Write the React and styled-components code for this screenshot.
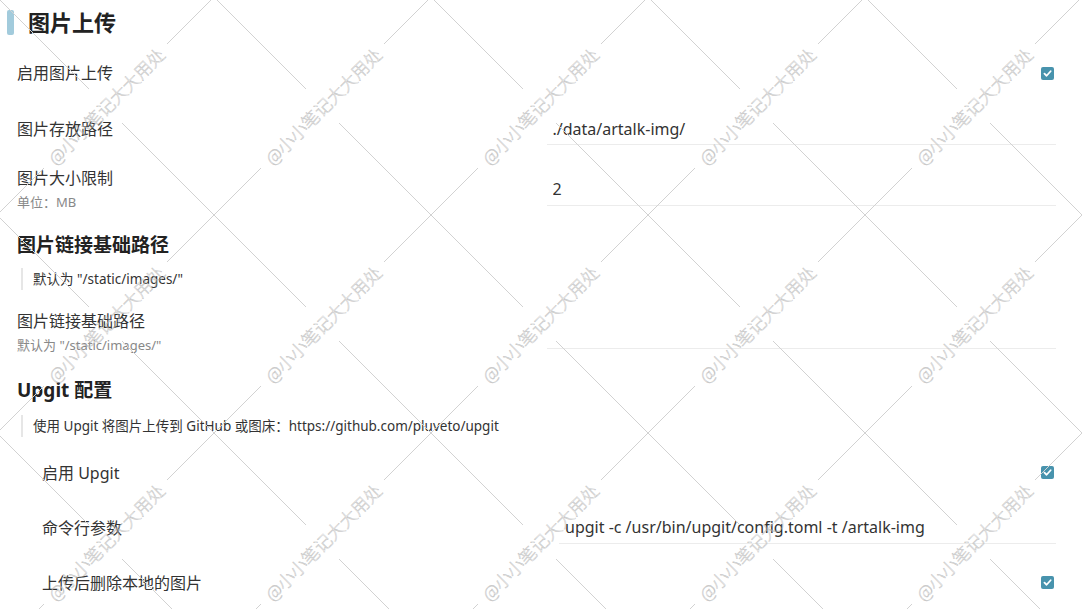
import React from "react";
import styled, { createGlobalStyle } from "styled-components";

const GlobalStyle = createGlobalStyle`
  html, body { margin: 0; padding: 0; background: #fff; }
  body { font-family: "Noto Sans", "Noto Sans CJK SC", sans-serif; color: #333; }
`;

const Page = styled.div`
  position: relative;
  width: 1082px;
  height: 609px;
  overflow: hidden;
  box-sizing: border-box;
  padding: 8px 26px 0 17px;
  background: #fff;
`;

const Title = styled.h2`
  margin: 0 0 9px -10px;
  display: flex;
  align-items: center;
  gap: 14px;
  font-size: 22px;
  line-height: 28px;
  font-weight: 700;
  color: #222;
  &::before {
    content: "";
    width: 7px;
    height: 25px;
    border-radius: 2px;
    background: #a2cbdc;
  }
`;

const Heading = styled.h3`
  margin: ${(p) => p.$top || 9}px 0 0;
  font-size: 19px;
  line-height: 28px;
  font-weight: 700;
  color: #222;
`;

const Quote = styled.blockquote`
  margin: ${(p) => p.$top || 9}px 0 10px 4px;
  padding-left: 10px;
  border-left: 2px solid #e6e6e6;
  font-size: 13.5px;
  line-height: 22px;
  color: #333;
`;

const Row = styled.div`
  display: grid;
  grid-template-columns: 1fr 1fr;
  column-gap: 20px;
  align-items: center;
  min-height: 56px;
  padding: 10px 0;
  box-sizing: border-box;
`;

const Group = styled.div`
  margin-left: 25px;
  margin-top: -2px;
  ${Row} {
    min-height: 55px;
  }
`;

const LabelBox = styled.div`
  display: flex;
  flex-direction: column;
`;

const Label = styled.div`
  font-size: 16px;
  line-height: 22px;
  color: #333;
`;

const Sub = styled.div`
  font-size: 13px;
  line-height: 20px;
  margin-top: 3px;
  color: #888;
`;

const Input = styled.input`
  width: 100%;
  height: 32px;
  box-sizing: border-box;
  border: none;
  border-bottom: 1px solid #ececec;
  outline: none;
  padding: 0 6px;
  background: transparent;
  font-family: inherit;
  font-size: 16px;
  color: #333;
`;

const CheckCell = styled.div`
  justify-self: end;
  margin-right: 2px;
  display: flex;
`;

const Check = styled.span`
  width: 13px;
  height: 13px;
  border-radius: 2px;
  background: #4893ad;
  display: flex;
  align-items: center;
  justify-content: center;
`;

const Watermark = styled.div`
  position: absolute;
  left: -3px;
  top: -3px;
  display: grid;
  grid-template-columns: repeat(5, 217px);
  grid-auto-rows: 218px;
  pointer-events: none;
`;

const Tile = styled.div`
  position: relative;
  width: 217px;
  height: 218px;
`;

const TileLines = styled.svg`
  position: absolute;
  left: 0;
  top: 0;
`;

const Mark = styled.span`
  position: absolute;
  left: 50%;
  top: 50%;
  transform: translate(-50%, -50%) rotate(-45deg);
  white-space: nowrap;
  font-family: "Noto Sans CJK SC", sans-serif;
  font-size: 17.5px;
  font-weight: 300;
  line-height: 1;
  color: transparent;
  -webkit-text-stroke: 0.4px #b8b8b8;
`;

const Checkbox = () => (
  <CheckCell>
    <Check>
      <svg width="9" height="9" viewBox="0 0 10 10">
        <path d="M1.6 5.2 L4 7.5 L8.5 2.5" fill="none" stroke="#fff" strokeWidth="2" strokeLinecap="round" strokeLinejoin="round" />
      </svg>
    </Check>
  </CheckCell>
);

const WatermarkLayer = () => {
  const tiles = Array.from({ length: 15 });
  return (
    <Watermark>
      {tiles.map((_, i) => (
        <Tile key={i}>
          <TileLines width="217" height="218" viewBox="0 0 217 218">
            <g stroke="#d2d2d2" strokeWidth="1" fill="none">
              <line x1="0" y1="0" x2="92" y2="92" />
              <line x1="125" y1="126" x2="217" y2="218" />
              <line x1="0" y1="218" x2="47" y2="171" />
              <line x1="170" y1="47" x2="217" y2="0" />
            </g>
          </TileLines>
          <Mark>@小小笔记大大用处</Mark>
        </Tile>
      ))}
    </Watermark>
  );
};

export default function App() {
  return (
    <>
      <GlobalStyle />
      <Page>
        <Title>图片上传</Title>

        <Row>
          <LabelBox><Label>启用图片上传</Label></LabelBox>
          <Checkbox />
        </Row>
        <Row>
          <LabelBox><Label>图片存放路径</Label></LabelBox>
          <Input readOnly defaultValue="./data/artalk-img/" />
        </Row>
        <Row>
          <LabelBox>
            <Label>图片大小限制</Label>
            <Sub>单位：MB</Sub>
          </LabelBox>
          <Input readOnly defaultValue="2" />
        </Row>

        <Heading>图片链接基础路径</Heading>
        <Quote>默认为 "/static/images/"</Quote>
        <Row>
          <LabelBox>
            <Label>图片链接基础路径</Label>
            <Sub>默认为 "/static/images/"</Sub>
          </LabelBox>
          <Input readOnly defaultValue="" />
        </Row>

        <Heading $top={11}>Upgit 配置</Heading>
        <Quote $top={11}>使用 Upgit 将图片上传到 GitHub 或图床：https://github.com/pluveto/upgit</Quote>
        <Group>
          <Row>
            <LabelBox><Label>启用 Upgit</Label></LabelBox>
            <Checkbox />
          </Row>
          <Row>
            <LabelBox><Label>命令行参数</Label></LabelBox>
            <Input readOnly defaultValue="upgit -c /usr/bin/upgit/config.toml -t /artalk-img" />
          </Row>
          <Row>
            <LabelBox><Label>上传后删除本地的图片</Label></LabelBox>
            <Checkbox />
          </Row>
        </Group>

        <WatermarkLayer />
      </Page>
    </>
  );
}
